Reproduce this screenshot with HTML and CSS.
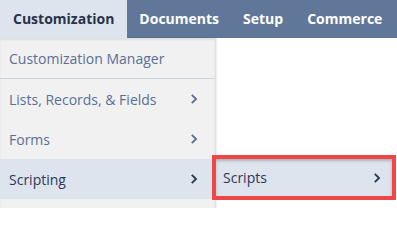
FILE: index.html
```html
<!DOCTYPE html>
<html>
<head>
<meta charset="utf-8">
<link rel="stylesheet" href="styles.css">
</head>
<body>
<div class="topbar">
  <div class="tab tab-active">Customization</div>
  <div class="tab">Documents</div>
  <div class="tab">Setup</div>
  <div class="tab">Commerce</div>
</div>
<div class="menu">
  <div class="item item-sep">Customization Manager</div>
  <div class="item">Lists, Records, &amp; Fields<svg class="chev" viewBox="0 0 8 12"><path d="M1.8 1.8 L6 6 L1.8 10.2"/></svg></div>
  <div class="item">Forms<svg class="chev" viewBox="0 0 8 12"><path d="M1.8 1.8 L6 6 L1.8 10.2"/></svg></div>
  <div class="item item-hover">Scripting<svg class="chev" viewBox="0 0 8 12"><path d="M1.8 1.8 L6 6 L1.8 10.2"/></svg></div>
</div>
<div class="submenu">
  <div class="subitem">Scripts<svg class="chev" viewBox="0 0 8 12"><path d="M1.8 1.8 L6 6 L1.8 10.2"/></svg></div>
</div>
</body>
</html>
```
FILE: styles.css
```css
html, body {
  margin: 0;
  padding: 0;
  background: #ffffff;
  font-family: "Open Sans", "Liberation Sans", sans-serif;
  overflow: hidden;
}
.topbar {
  display: flex;
  height: 38px;
  background: #607799;
}
.tab {
  display: flex;
  align-items: center;
  padding: 0 12px 1px 12px;
  color: #ffffff;
  font-weight: 700;
  font-size: 14px;
}
.tab-active {
  background: #dee4ee;
  color: #27324b;
  padding: 0 13px 1px 13px;
}
.menu {
  width: 215px;
  background: #f1f1f1;
  box-shadow: 1px 0 2px rgba(0,0,0,0.18), inset 0 2px 2px rgba(0,0,0,0.08);
  height: 170px;
}
.item {
  display: flex;
  align-items: center;
  justify-content: space-between;
  height: 40px;
  padding: 0 17px 0 9px;
  font-size: 14px;
  color: #5a6f96;
}
.item-sep {
  border-bottom: 1px solid #cfd5de;
}
.item-hover {
  background: #dee4ee;
  color: #2c3856;
}
.chev {
  width: 8px;
  height: 12px;
  fill: none;
  stroke: #5a6f96;
  stroke-width: 1.9;
}
.item-hover .chev, .subitem .chev {
  stroke: #2c3856;
}
.submenu {
  position: absolute;
  left: 212px;
  top: 155px;
  width: 176px;
  border: 4px solid #f04646;
}
.subitem {
  display: flex;
  align-items: center;
  justify-content: space-between;
  height: 37px;
  padding: 0 11px 0 7px;
  font-size: 14px;
  color: #2c3856;
  background: #dee4ee;
  box-shadow: inset 0 2px 3px rgba(0,0,0,0.22);
}
```
